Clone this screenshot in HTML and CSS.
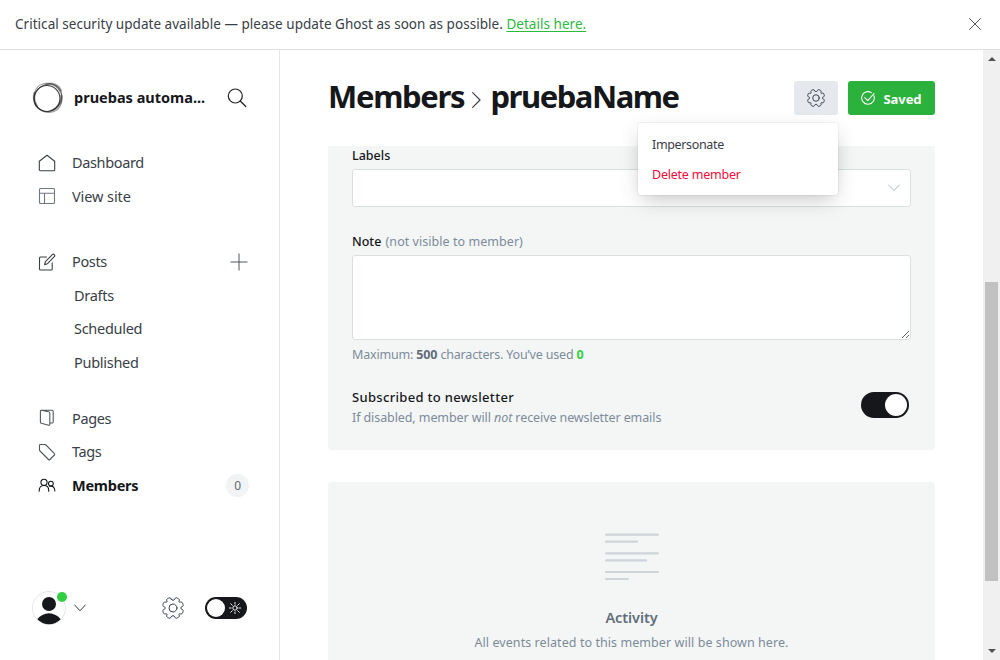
FILE: index.html
```html
<!DOCTYPE html>
<html lang="en">
<head>
<meta charset="utf-8">
<title>Members - pruebaName</title>
<link rel="stylesheet" href="styles.css">
</head>
<body>
<div class="app">
  <header class="alert">
    <p class="alert-text">Critical security update available — please update Ghost as soon as possible. <a class="alert-link">Details here.</a></p>
    <svg class="alert-close" viewBox="0 0 12 12"><path d="M.5.5l11 11M11.5.5l-11 11"/></svg>
  </header>
  <div class="body">
    <nav class="sidebar">
      <div class="site">
        <svg class="site-logo" viewBox="0 0 32 32">
          <circle class="ring ring-dark" cx="15" cy="16.500" r="13"/>
          <ellipse class="ring ring-mid" cx="16.300" cy="15.800" rx="14.500" ry="13" transform="rotate(-45 16 16)"/>
          <ellipse class="ring ring-soft" cx="15.900" cy="16" rx="15" ry="13.600" transform="rotate(60 16 16)"/>
          <path class="ring ring-thick" d="M14.500 2.500c6-2 12 .7 14.200 6M29.500 14c.5 7-4 12.500-10 14.700M2.500 11c-1 5-.5 9 2 13"/>
        </svg>
        <span class="site-name">pruebas automa...</span>
        <svg class="search" viewBox="0 0 20 20"><circle cx="8.300" cy="8" r="7"/><path d="M13.300 13l5.500 5.500"/></svg>
      </div>
      <ul class="nav">
        <li class="item"><svg class="ico" viewBox="0 0 18 18"><path d="M1.300 7.300L9 1.200l7.700 6.100v8.400a1 1 0 0 1-1 1H2.300a1 1 0 0 1-1-1z"/></svg><span class="label">Dashboard</span></li>
        <li class="item"><svg class="ico ico-gray" viewBox="0 0 18 18"><rect x="1.500" y="1.500" width="15" height="15" rx="1"/><path d="M1.500 6.200h15M6.500 6.200v10.300"/></svg><span class="label view-label">View site</span></li>
      </ul>
      <ul class="nav nav-posts">
        <li class="item"><svg class="ico" viewBox="0 0 18 18"><path d="M8.500 4H2.500a1 1 0 0 0-1 1v11a1 1 0 0 0 1 1h10.700a1 1 0 0 0 1-1V9.800M6.600 11.600l.8-3L14.300 1.700a1.300 1.300 0 0 1 2 2L9.500 10.700z"/></svg><span class="label">Posts</span><svg class="plus" viewBox="0 0 18 18"><path d="M9 .5v17M.5 9h17"/></svg></li>
        <li class="item sub">Drafts</li>
        <li class="item sub">Scheduled</li>
        <li class="item sub">Published</li>
      </ul>
      <ul class="nav nav-content">
        <li class="item"><svg class="ico ico-pages" viewBox="0 0 18 18"><path d="M3 1.200h11a1.200 1.200 0 0 1 1.200 1.200v10.400a1.200 1.200 0 0 1-1.200 1.200h-2.200M3.400 1.200l7.200 1.600a1.500 1.500 0 0 1 1.200 1.400v11c0 .7-.5 1.100-1.200 1l-7.200-1.900a1.300 1.300 0 0 1-1-1.300V2.100a1 1 0 0 1 1-.9z"/></svg><span class="label">Pages</span></li>
        <li class="item"><svg class="ico ico-pages" viewBox="0 0 18 18"><path d="M1.500 2.300a.8.8 0 0 1 .8-.8h4.600c.4 0 .8.2 1.100.5l8.400 8.600a1 1 0 0 1 0 1.400l-4.500 4.500a1 1 0 0 1-1.400 0L2 8a1.600 1.600 0 0 1-.5-1.100z"/></svg><span class="label">Tags</span></li>
        <li class="item active"><svg class="ico" viewBox="0 0 18 18"><circle cx="6" cy="6.300" r="3.100"/><circle cx="12.900" cy="7.600" r="2.400"/><path d="M1.200 15.300v-1C1.200 11.500 3 9.500 6 9.500s4.700 2 4.700 4.800v1M11.500 10.300c3.200-.8 5.300 1.200 5.300 4.200v.5"/></svg><span class="label">Members</span><span class="count">0</span></li>
      </ul>
      <div class="foot">
        <span class="avatar">
          <svg class="avatar-pic" viewBox="0 0 34 34"><circle class="avatar-rim" cx="17" cy="17" r="16.500"/><circle cx="17" cy="13" r="7"/><path d="M5.300 28.300a14.500 14.500 0 0 1 23.400 0 16.500 16.500 0 0 1-23.400 0z"/></svg>
          <span class="dot"></span>
        </span>
        <svg class="chev" viewBox="0 0 12 8"><path d="M.6.900L6 6.800 11.400.9"/></svg>
        <svg class="gear foot-gear" viewBox="-11 -11 22 22"><use href="#gear-shape"/></svg>
        <span class="night"><span class="night-knob"></span><svg class="sun" viewBox="-6 -6 12 12"><circle r="2.200"/><path d="M0-3.800V-6M0 3.800V6M-3.800 0H-6M3.800 0H6M-2.700-2.700l-1.600-1.600M2.700 2.700l1.600 1.600M-2.700 2.700l-1.600 1.600M2.700-2.700l1.600-1.600"/></svg></span>
      </div>
    </nav>
    <main class="main">
      <div class="head">
        <h1 class="title"><span>Members</span><svg class="crumb" viewBox="0 0 9 16"><path d="M.7.700L8 8 .7 15.300"/></svg><span class="name">pruebaName</span></h1>
        <div class="actions">
          <span class="btn btn-gear"><svg class="gear" viewBox="-11 -11 22 22"><g id="gear-shape"><circle r="4"/><path d="M-1.800-8.900C-2.300-10.400-3.300-10.600-4.600-9.800-6-9.200-6.800-8.400-6.100-6.900-5.700-5.800-6.300-5.500-7.700-5.900-9.400-6.300-9.700-4.800-10-3.600-10.400-2.300-10.200-1.800-8.900-1.300-7.300-.6-7.300.6-8.900 1.300-10.200 1.800-10.400 2.300-10 3.600-9.700 4.800-9.400 6.300-7.700 5.900-6.300 5.500-5.700 5.800-6.100 6.900-6.800 8.400-6 9.200-4.600 9.800-3.300 10.600-2.300 10.400-1.800 8.900-1 7.300 1 7.300 1.800 8.900 2.300 10.400 3.300 10.600 4.600 9.800 6 9.200 6.800 8.400 6.100 6.900 5.700 5.800 6.300 5.500 7.700 5.900 9.400 6.300 9.700 4.800 10 3.600 10.400 2.300 10.200 1.800 8.900 1.300 7.300.6 7.300-.6 8.900-1.300 10.200-1.800 10.400-2.300 10-3.600 9.700-4.800 9.400-6.300 7.700-5.900 6.300-5.500 5.700-5.800 6.100-6.900 6.800-8.400 6-9.200 4.600-9.800 3.300-10.600 2.300-10.400 1.800-8.900 1-7.300-1-7.300-1.800-8.900z"/></g></svg></span>
          <span class="btn btn-saved"><svg class="check" viewBox="0 0 14 14"><path d="M12.900 4.800A6.300 6.300 0 1 1 10.300 1.600M3.800 6.700l3 3L13 2.500"/></svg><span class="saved-text">Saved</span></span>
          <div class="menu"><a class="menu-item">Impersonate</a><a class="menu-item danger">Delete member</a></div>
        </div>
      </div>
      <section class="panel">
        <div class="field-label">Labels</div>
        <div class="select"><svg class="chev-sel" viewBox="0 0 12 8"><path d="M.6.900L6 6.500 11.400.9"/></svg></div>
        <div class="field-label note-label">Note <span class="muted">(not visible to member)</span></div>
        <textarea class="note"></textarea>
        <p class="help">Maximum: <b>500</b> characters. You’ve used <b class="used">0</b></p>
        <div class="subscribe">
          <div><div class="sub-title">Subscribed to newsletter</div><p class="sub-desc">If disabled, member will <i>not</i> receive newsletter emails</p></div>
          <span class="switch"><span class="knob"></span></span>
        </div>
      </section>
      <section class="panel activity">
        <svg class="lines" viewBox="0 0 54 48"><path d="M1 1.700h52M1 8.700h31M1 20.400h52M1 27.400h40M1 39h52M1 46h22"/></svg>
        <h4 class="act-title">Activity</h4>
        <p class="act-text">All events related to this member will be shown here.</p>
      </section>
    </main>
    <div class="scrollbar"><span class="arrow up"></span><span class="thumb"></span><span class="arrow down"></span></div>
  </div>
</div>
</body>
</html>
```
FILE: styles.css
```css
* { box-sizing: border-box; }
body, h1, h4, p, ul { margin: 0; padding: 0; }
body { font-family: "Noto Sans", "Open Sans", sans-serif; font-size: 13px; color: #15171a; background: #fff; overflow: hidden; }
ul { list-style: none; }
svg { fill: none; stroke: #394047; stroke-linecap: round; stroke-linejoin: round; flex: none; display: block; }
.app { width: 1000px; height: 660px; display: flex; flex-direction: column; }
.alert { height: 50px; flex: none; border-bottom: 1px solid #dddedf; display: flex; align-items: center; justify-content: space-between; padding: 0 19px 2px 15px; }
.alert-text { color: #394047; font-size: 13.5px; letter-spacing: .035px; white-space: nowrap; }
.alert-link { color: #2bba3c; text-decoration: underline; text-underline-offset: 2px; }
.alert-close { width: 12px; height: 12px; stroke: #50555b; }
.body { flex: 1; display: flex; min-height: 0; }

.sidebar { width: 280px; border-right: 1px solid #e3e5e6; display: flex; flex-direction: column; padding: 32px 30px 35px 32px; }
.site { display: flex; align-items: center; height: 32px; margin-bottom: 32px; }
.site-logo { width: 32px; height: 32px; }
.ring { stroke: #222; stroke-width: 1; }
.ring-dark { stroke-width: 1.2; opacity: .85; }
.ring-mid { opacity: .6; }
.ring-soft { opacity: .45; }
.ring-thick { stroke-width: 2.6; opacity: .35; }
.site-name { font-size: 14.5px; font-weight: 700; margin-left: 10px; padding-bottom: 2px; flex: 1; color: #15171a; white-space: nowrap; }
.search { width: 20px; height: 20px; margin-right: 2px; stroke-width: 1.2; stroke: #222; }
.nav { color: #394047; font-size: 14.5px; letter-spacing: -.36px; }
.item { height: 33.5px; display: flex; align-items: center; padding-left: 6px; }
.ico { width: 18px; height: 18px; margin-right: 16px; stroke-width: 1.1; }
.ico-gray { stroke: #6f777f; }
.ico-pages { stroke: #50575e; }
.label { flex: 1; padding-bottom: 1px; }
.view-label { letter-spacing: -.08px; }
.plus { width: 18px; height: 18px; stroke: #50565c; stroke-linecap: butt; margin-right: 1px; }
.nav-posts { margin-top: 32px; }
.sub { padding: 0 0 1px 42px; letter-spacing: -.28px; }
.nav-content { margin-top: 22.5px; }
.active { color: #15171a; font-weight: 700; letter-spacing: -.25px; }
.active .ico { stroke: #15171a; }
.count { width: 23px; height: 23px; border-radius: 50%; background: #f1f3f4; color: #626d79; font-size: 12px; font-weight: 400; display: flex; align-items: center; justify-content: center; padding-top: 1px; }
.foot { margin-top: auto; display: flex; align-items: center; height: 34px; }
.avatar { position: relative; width: 34px; height: 34px; }
.avatar-pic { width: 34px; height: 34px; fill: #15171a; stroke: none; }
.avatar-rim { fill: #fff; stroke: #e3e6e8; }
.dot { position: absolute; right: -1px; top: 1px; width: 10px; height: 10px; border-radius: 50%; background: #30cf43; }
.chev { width: 12px; height: 8px; margin-left: 8px; }
.foot-gear { width: 22px; height: 22px; margin-left: 76px; }
.night { width: 42px; height: 22px; border-radius: 11px; background: #15171a; margin-left: 21px; display: flex; align-items: center; padding-left: 2px; }
.night-knob { width: 18px; height: 18px; border-radius: 50%; background: #fff; }
.sun { width: 12px; height: 12px; stroke: #fff; stroke-width: .9; margin-left: 4px; }

.main { width: 703px; padding: 0 48px; overflow: hidden; }
.head { height: 96px; display: flex; justify-content: space-between; align-items: center; }
.title { display: flex; align-items: center; font-size: 31px; font-weight: 700; line-height: 40px; letter-spacing: -1.3px; padding-bottom: 4px; }
.name { letter-spacing: -1.45px; }
.crumb { width: 9px; height: 16px; margin: 8px 9px 0 8px; stroke-width: 1.2; }
.actions { display: flex; gap: 10px; position: relative; }
.btn { height: 34px; border-radius: 3px; display: flex; align-items: center; justify-content: center; }
.btn-gear { width: 44px; background: #e5e9ed; }
.btn-gear .gear { width: 18px; height: 18px; stroke-width: 1.2; }
.btn-saved { width: 87px; background: #2ab23c; color: #fff; font-size: 13px; font-weight: 700; gap: 8px; }
.saved-text { padding-top: 2px; letter-spacing: -.05px; }
.check { width: 14px; height: 14px; stroke: #fff; stroke-width: 1.1; }
.menu { position: absolute; right: 97px; top: 42px; width: 200px; height: 72px; padding: 6px 14px; background: #fff; border-radius: 3px; box-shadow: 0 0 0 1px rgba(0,0,0,.04), 0 7px 20px -4px rgba(0,0,0,.25); z-index: 2; font-size: 12.5px; letter-spacing: -.22px; color: #394047; }
.menu-item { display: flex; align-items: center; height: 30px; }
.menu-item:first-child { letter-spacing: -.35px; }
.danger { color: #f50b3b; }

.panel { background: #f4f6f6; border-radius: 0 0 3px 3px; height: 304px; padding: 0 24px; }
.field-label { height: 23px; padding-top: 1px; line-height: 18px; font-size: 12.5px; font-weight: 500; white-space: nowrap; }
.muted { color: #7c8b9a; font-weight: 400; letter-spacing: .05px; margin-left: 1px; }
.select { height: 38px; background: #fff; border: 1px solid #dadfdf; border-radius: 3px; display: flex; align-items: center; justify-content: flex-end; padding-right: 10px; }
.chev-sel { width: 12px; height: 8px; stroke: #aeb7c1; }
.note-label { margin-top: 24px; height: 24px; padding-top: 2px; }
.note { display: block; width: 559px; height: 85px; border: 1px solid #dadfdf; border-radius: 3px; background: #fff; resize: vertical; outline: 0; }
.help { color: #7c8b9a; font-size: 12.5px; line-height: 18px; margin-top: 6px; letter-spacing: -.17px; }
.help b { color: #626d79; }
.help .used { color: #30cf43; }
.subscribe { display: flex; justify-content: space-between; margin-top: 23px; padding-right: 2px; }
.sub-title { font-weight: 500; font-size: 13px; line-height: 20px; letter-spacing: .32px; }
.sub-desc { color: #7c8b9a; font-size: 12.5px; line-height: 20px; letter-spacing: -.09px; padding-top: 1px; }
.switch { width: 48px; height: 26px; border-radius: 13px; background: #15171a; margin-top: 5px; padding: 2px; display: flex; justify-content: flex-end; }
.knob { width: 22px; height: 22px; border-radius: 50%; background: #fff; }
.activity { margin-top: 32px; border-radius: 3px; display: flex; flex-direction: column; align-items: center; padding-top: 51px; }
.lines { width: 54px; height: 48px; stroke: #ced4d9; stroke-width: 2.2; }
.act-title { font-size: 14.5px; line-height: 20px; font-weight: 600; color: #626d79; margin-top: 26px; letter-spacing: -.1px; }
.act-text { color: #7c8b9a; font-size: 12.5px; line-height: 20px; margin-top: 6px; letter-spacing: .07px; }

.scrollbar { width: 17px; background: #f0f0f0; display: flex; flex-direction: column; align-items: center; padding: 7px 0 7px; }
.arrow { border: 4px solid transparent; height: 0; }
.up { border-top: 0; border-bottom-color: #505050; }
.down { border-bottom: 0; border-top-color: #505050; margin-top: auto; }
.thumb { width: 13px; height: 299px; background: #c1c1c1; margin-top: 221px; }
```
